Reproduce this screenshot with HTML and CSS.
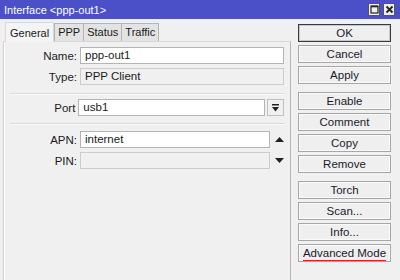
FILE: index.html
```html
<!DOCTYPE html>
<html lang="en">
<head>
    <meta charset="UTF-8">
    <meta name="viewport" content="width=device-width, initial-scale=1.0">
    <title>Interface &lt;ppp-out1&gt;</title>
    <link rel="stylesheet" href="styles.css">
</head>
<body>
    <div class="window">
        <div class="titlebar">
            <span class="title">Interface &lt;ppp-out1&gt;</span>
            <div class="win-controls">
                <span class="win-btn">
                    <svg width="9" height="9" viewBox="0 0 9 9"><rect x="1" y="1" width="7" height="7" fill="none" stroke="#222" stroke-width="1.2"/><line x1="1" y1="1.6" x2="8" y2="1.6" stroke="#222" stroke-width="1.4"/></svg>
                </span>
                <span class="win-btn">
                    <svg width="9" height="9" viewBox="0 0 9 9"><path d="M1.5 1.5 L7.5 7.5 M7.5 1.5 L1.5 7.5" stroke="#222" stroke-width="1.8"/></svg>
                </span>
            </div>
        </div>
        <div class="content">
            <div class="left">
                <div class="tabs">
                    <span class="tab active">General</span>
                    <span class="tab">PPP</span>
                    <span class="tab">Status</span>
                    <span class="tab">Traffic</span>
                </div>
                <div class="pane">
                    <div class="row">
                        <label class="label">Name:</label>
                        <div class="field">ppp-out1</div>
                    </div>
                    <div class="row">
                        <label class="label">Type:</label>
                        <div class="field disabled">PPP Client</div>
                    </div>
                    <div class="separator"></div>
                    <div class="row">
                        <label class="label">Port</label>
                        <div class="field short">usb1</div>
                        <span class="drop-btn">
                            <svg width="7" height="8" viewBox="0 0 7 8"><rect x="0" y="0" width="7" height="1.5" fill="#222"/><path d="M0 3 L7 3 L3.5 7.5 Z" fill="#222"/></svg>
                        </span>
                    </div>
                    <div class="separator sep2"></div>
                    <div class="row">
                        <label class="label">APN:</label>
                        <div class="field medium">internet</div>
                        <span class="arrow">
                            <svg width="9" height="5" viewBox="0 0 9 5"><path d="M0 5 L9 5 L4.5 0 Z" fill="#222"/></svg>
                        </span>
                    </div>
                    <div class="row">
                        <label class="label">PIN:</label>
                        <div class="field medium disabled"></div>
                        <span class="arrow">
                            <svg width="9" height="5" viewBox="0 0 9 5"><path d="M0 0 L9 0 L4.5 5 Z" fill="#222"/></svg>
                        </span>
                    </div>
                </div>
            </div>
            <div class="actions">
                <div class="group">
                    <button class="btn default">OK</button>
                    <button class="btn">Cancel</button>
                    <button class="btn">Apply</button>
                </div>
                <div class="group">
                    <button class="btn">Enable</button>
                    <button class="btn">Comment</button>
                    <button class="btn">Copy</button>
                    <button class="btn">Remove</button>
                </div>
                <div class="group">
                    <button class="btn">Torch</button>
                    <button class="btn">Scan...</button>
                    <button class="btn">Info...</button>
                    <button class="btn"><span class="underline">Advanced Mode</span></button>
                </div>
            </div>
        </div>
    </div>
</body>
</html>
```

FILE: styles.css
```css
body {
    margin: 0;
    font-family: "Liberation Sans", Arial, sans-serif;
    font-size: 11.5px;
    color: #1a1a1a;
    background-color: #f0f0f0;
}
.window {
    width: 400px;
    height: 280px;
    overflow: hidden;
    background-color: #f0f0f0;
}
.titlebar {
    height: 19px;
    background-color: #4b4fc8;
    color: #fff;
    display: flex;
    align-items: center;
    justify-content: space-between;
    padding: 0 5px 0 4px;
}
.title {
    font-size: 11px;
}
.win-controls {
    display: flex;
    gap: 3px;
}
.win-btn {
    width: 10px;
    height: 11px;
    background-color: #eeeeee;
    border: 1px solid #555;
    display: flex;
    align-items: center;
    justify-content: center;
}
.content {
    display: flex;
}
.left {
    width: 288px;
    padding-left: 3px;
}
.tabs {
    display: flex;
    height: 18px;
    margin-top: 4px;
    padding-left: 2px;
    align-items: flex-end;
    font-size: 11px;
}
.tab {
    height: 17px;
    line-height: 17px;
    padding: 0 3px;
    background-color: #e3e3e3;
    border: 1px solid #b4b4b4;
    border-bottom: none;
    margin-left: -1px;
}
.tab.active {
    height: 19px;
    line-height: 20px;
    padding: 0 4px;
    background-color: #f4f4f4;
    border-color: #d8d8d8;
    margin-left: 0;
    margin-right: 1px;
    margin-bottom: -1px;
    position: relative;
}
.pane {
    height: 250px;
    border-top: 1px solid #d8d8d8;
    border-left: 1px solid #d0d0d0;
    border-right: 1px solid #b8b8b8;
    box-shadow: inset 1px 0 #fff;
    padding: 5px 6px 0 0;
    display: flex;
    flex-direction: column;
    gap: 4px;
}
.row {
    display: flex;
    align-items: center;
    height: 17px;
}
.label {
    width: 73px;
    margin-right: 3px;
    text-align: right;
}
.field {
    flex: 1;
    height: 15px;
    line-height: 15px;
    padding: 0 4px;
    background-color: #fff;
    border: 1px solid #b4b4b4;
}
.field.disabled {
    background-color: #f0f0f0;
    border-color: #cccccc;
}
.field.short {
    flex: none;
    width: 177px;
}
.field.medium {
    flex: none;
    width: 180px;
}
.drop-btn {
    width: 15px;
    height: 15px;
    margin-left: 2px;
    border: 1px solid #c0c0c0;
    display: flex;
    align-items: center;
    justify-content: center;
}
.arrow {
    margin-left: 5px;
    display: flex;
}
.separator {
    height: 1px;
    margin: 4px 0 0 6px;
    background-color: #dadada;
    border-bottom: 1px solid #fafafa;
}
.sep2 {
    margin-top: 3px;
    margin-bottom: 2px;
}
.actions {
    width: 93px;
    margin-left: 7px;
    padding-top: 5px;
    display: flex;
    flex-direction: column;
    gap: 8px;
}
.group {
    display: flex;
    flex-direction: column;
    gap: 3px;
}
.btn {
    height: 18px;
    padding: 0;
    font-family: "Liberation Sans", Arial, sans-serif;
    font-size: 11.5px;
    color: #1a1a2a;
    background-color: #efefef;
    border: 1px solid #a6a6a6;
    box-shadow: inset 0 0 0 1px #fafafa;
    line-height: 14px;
}
.btn.default {
    border-color: #3a3a3a;
    box-shadow: inset 0 0 0 1px #c8c8c8;
}
.underline {
    border-bottom: 1px solid #e02020;
    padding-bottom: 1px;
}
```
